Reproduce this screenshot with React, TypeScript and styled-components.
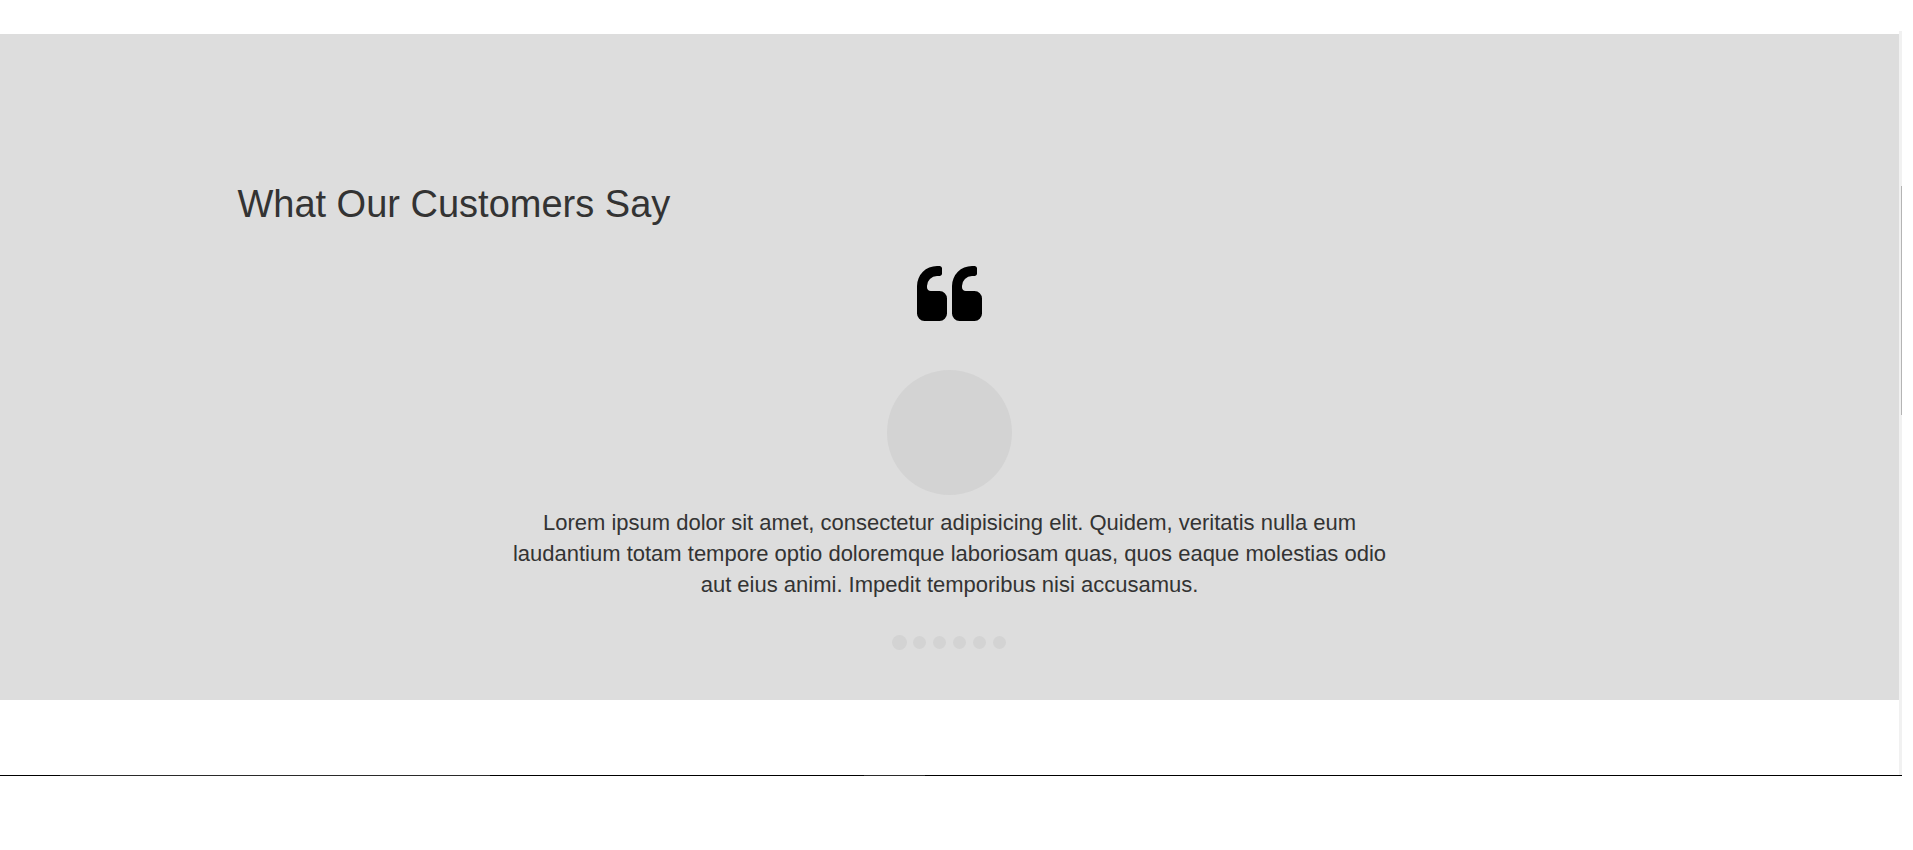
import React, { useState } from "react";
import styled, { createGlobalStyle } from "styled-components";

const GlobalStyle = createGlobalStyle`
  *, *::before, *::after { box-sizing: border-box; }
  body {
    margin: 0;
    background: #fff;
    color: #333;
    font-family: "Liberation Sans", Arial, sans-serif;
  }
`;

const Page = styled.div`
  padding: 31px 11px 74px 0;
`;

const Viewport = styled.div`
  display: flex;
`;

const Content = styled.main`
  flex: 1;
  padding: 3px 0 75px;
`;

const ScrollTrack = styled.div`
  display: flex;
  justify-content: flex-end;
  width: 3px;
  padding-top: 155px;
  background: #f1f1f1;
`;

const ScrollThumb = styled.div`
  width: 1px;
  height: 229px;
  background: #b4b4b4;
`;

const Testimonials = styled.section`
  padding: 148px 12.5% 50px;
  background: #ddd;
`;

const Title = styled.h2`
  margin: 0 0 40px;
  font-size: 38px;
  font-weight: 400;
  line-height: 44px;
`;

const Slide = styled.figure`
  display: flex;
  flex-direction: column;
  align-items: center;
  margin: 0;
`;

const QuoteIcon = styled.svg`
  width: 65px;
  height: 55px;
  margin-bottom: 49px;
  fill: #000;
`;

const Avatar = styled.div`
  width: 125px;
  height: 125px;
  border-radius: 50%;
  background: #d3d3d3;
`;

const Quote = styled.blockquote`
  max-width: 900px;
  margin: 12px 0 0;
  font-size: 22px;
  line-height: 31px;
  text-align: center;
`;

const Dots = styled.nav`
  display: flex;
  justify-content: center;
  align-items: center;
  gap: 7px;
  height: 15px;
  margin-top: 35px;
`;

const Dot = styled.button<{ $active: boolean }>`
  width: 13px;
  height: 13px;
  padding: 0;
  border: 0;
  border-radius: 50%;
  background: #d3d3d3;
  box-shadow: ${({ $active }) => ($active ? "0 0 0 1px #d3d3d3" : "none")};
  cursor: pointer;
`;

const BottomEdge = styled.div`
  height: 1px;
  background: linear-gradient(
    to right,
    #000 60px,
    #2a2a2a 60px 490px,
    #000 490px 864px,
    #2a2a2a 864px 925px,
    #000 925px
  );
`;

const quoteMark =
  "v384q0 80-56 136t-136 56h-384q-80 0-136-56t-56-136v-704q0-104 40.5-198.5t109.5-163.5 163.5-109.5 198.5-40.5h64q26 0 45 19t19 45v128q0 26-19 45t-45 19h-64q-106 0-181 75t-75 181v32q0 40 28 68t68 28h224q80 0 136 56t56 136z";

const slides = [1, 2, 3, 4, 5, 6];

export default function App() {
  const [active, setActive] = useState(1);

  return (
    <>
      <GlobalStyle />
      <Page>
        <Viewport>
          <Content>
            <Testimonials>
              <Title>What Our Customers Say</Title>
              <Slide>
                <QuoteIcon viewBox="0 128 1664 1408" aria-hidden="true">
                  <path d={`M768 960${quoteMark}M1664 960${quoteMark}`} />
                </QuoteIcon>
                <Avatar />
                <Quote>
                  Lorem ipsum dolor sit amet, consectetur adipisicing elit. Quidem, veritatis
                  nulla eum laudantium totam tempore optio doloremque laboriosam quas, quos
                  eaque molestias odio aut eius animi. Impedit temporibus nisi accusamus.
                </Quote>
              </Slide>
              <Dots aria-label="Testimonials">
                {slides.map((n) => (
                  <Dot
                    key={n}
                    type="button"
                    aria-label={`Testimonial ${n}`}
                    $active={n === active}
                    onClick={() => setActive(n)}
                  />
                ))}
              </Dots>
            </Testimonials>
          </Content>
          <ScrollTrack>
            <ScrollThumb />
          </ScrollTrack>
        </Viewport>
        <BottomEdge />
      </Page>
    </>
  );
}
